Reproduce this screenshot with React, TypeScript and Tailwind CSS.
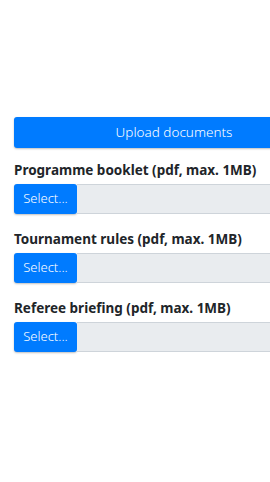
const fields = [
  "Programme booklet (pdf, max. 1MB)",
  "Tournament rules (pdf, max. 1MB)",
  "Referee briefing (pdf, max. 1MB)",
];

export default function App() {
  return (
    <div className="h-[482px] w-[270px] overflow-hidden bg-white font-['Noto_Sans',sans-serif]">
      <div className="w-[334px] pl-[14px] pt-[117px]">
        <button className="h-[31px] w-full rounded-[3px] bg-[#007bff] text-[13.5px] font-light text-white shadow-[0_1px_2px_rgba(0,0,0,0.25)]">
          Upload documents
        </button>
        {fields.map((f, i) => (
          <div key={f} className={i === 0 ? "mt-[12px]" : "mt-[15px]"}>
            <label className="block text-[13.5px] font-bold leading-[20px] text-[#212529]">{f}</label>
            <div className="mt-[4px] flex h-[30px]">
              <span className="flex w-[63px] items-center justify-center rounded-[3px] bg-[#007bff] text-[13px] font-light text-white shadow-[0_1px_2px_rgba(0,0,0,0.25)]">
                Select...
              </span>
              <div className="flex-1 border-y border-[#ced4da] bg-[#e9ecef]" />
            </div>
          </div>
        ))}
      </div>
    </div>
  );
}
